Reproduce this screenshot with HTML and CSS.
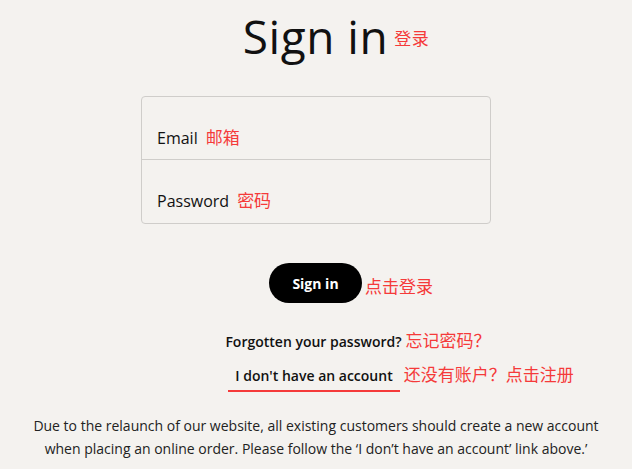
FILE: index.html
```html
<!DOCTYPE html>
<html>
<head>
  <meta charset="utf-8" />
  <title>Sign in</title>
  <meta name="viewport" content="width=device-width, initial-scale=1">
  <link rel="stylesheet" href="styles.css">
</head>
<body>
  <div class="page">
    <h1 class="title">Sign in<span class="note note-title">登录</span></h1>

    <div class="form-box">
      <div class="field">Email<span class="note">邮箱</span></div>
      <div class="field field-last">Password<span class="note">密码</span></div>
    </div>

    <div class="btn-row">
      <button class="btn">Sign in</button><span class="note note-btn">点击登录</span>
    </div>

    <p class="forgot">Forgotten your password?<span class="note note-tight">忘记密码？</span></p>

    <p class="register"><span class="reg-link">I don't have an account</span><span class="note note-tight">还没有账户？点击注册</span></p>

    <p class="info">Due to the relaunch of our website, all existing customers should create a new account<br>when placing an online order. Please follow the ‘I don’t have an account’ link above.’</p>
  </div>
</body>
</html>
```

FILE: styles.css
```css
html, body {
  margin: 0px;
  padding: 0px;
}
body {
  background: #f4f2ef;
  color: #111;
  font-family: "Open Sans", "Noto Sans CJK SC", sans-serif;
}
.page {
  width: 632px;
  display: flex;
  flex-direction: column;
  align-items: center;
}
.note {
  color: #f53a3a;
  font-weight: 400;
  font-family: "Noto Sans CJK SC", sans-serif;
  font-size: 17px;
  margin-left: 8px;
}
.title {
  margin: 6px 0 0 0;
  font-size: 46px;
  font-weight: 400;
  line-height: 60px;
  letter-spacing: 0.5px;
  padding-left: 40px;
}
.note-title {
  margin-left: 6px;
  vertical-align: 9px;
}
.form-box {
  margin-top: 28px;
  width: 348px;
  border: 1px solid #cfcdca;
  border-radius: 4px;
}
.field {
  height: 63px;
  box-sizing: border-box;
  padding: 28px 0 0 15px;
  font-size: 16px;
  line-height: 24px;
  border-bottom: 1px solid #cfcdca;
}
.field-last {
  border-bottom: none;
}
.btn-row {
  margin-top: 39px;
  display: flex;
  align-items: center;
  padding-left: 70px;
}
.btn {
  width: 93px;
  height: 40px;
  border: none;
  border-radius: 20px;
  background: #000;
  color: #fff;
  font-family: "Open Sans", sans-serif;
  font-weight: 700;
  font-size: 14px;
}
.note-btn {
  margin-left: 3px;
  margin-top: 4px;
}
.forgot {
  margin: 26px 0 0 0;
  font-size: 14px;
  font-weight: 600;
  line-height: 22px;
  padding-left: 84px;
}
.note-tight {
  margin-left: 4px;
}
.register {
  margin: 10px 0 0 0;
  font-size: 14px;
  font-weight: 600;
  line-height: 22px;
  padding-left: 170px;
}
.reg-link {
  display: inline-block;
  padding: 0 7px 3px 7px;
  border-bottom: 2px solid #f53a3a;
}
.info {
  margin: 22px 0 0 0;
  text-align: center;
  font-size: 14px;
  line-height: 23px;
  color: #222;
}
```
